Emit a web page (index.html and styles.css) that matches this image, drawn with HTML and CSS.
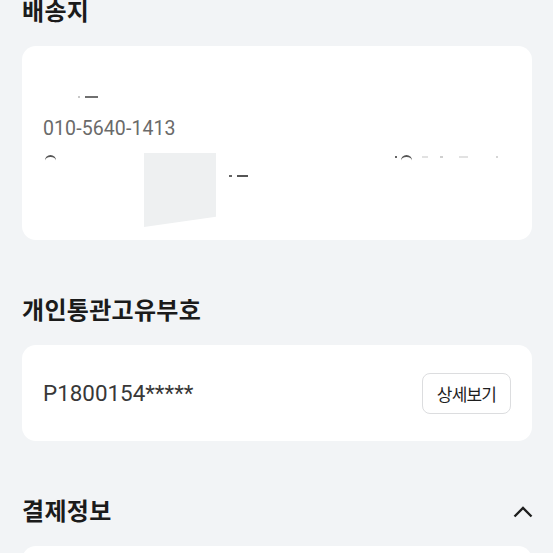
FILE: index.html
```html
<!DOCTYPE html>
<html lang="ko">
<head>
<meta charset="utf-8">
<title>주문 정보</title>
<link rel="stylesheet" href="styles.css">
</head>
<body>
<main class="page">
  <section class="section section-first">
    <h2 class="section-title">배송지</h2>
    <div class="card card-address">
      <div class="addr-name"><span class="mark mark-dot"></span><span class="mark mark-dash"></span></div>
      <div class="addr-phone">010-5640-1413</div>
      <div class="addr-line">
        <span class="mark mark-arc"></span>
        <span class="addr-tail">
          <span class="mark mark-dot3"></span>
          <span class="mark mark-arc"></span>
          <span class="mark mark-faint mark-faint-a"></span>
          <span class="mark mark-faint mark-faint-b"></span>
          <span class="mark mark-faint mark-faint-c"></span>
          <span class="mark mark-faint mark-faint-d"></span>
        </span>
      </div>
      <div class="addr-line2">
        <span class="mark mark-dot2"></span><span class="mark mark-dash2"></span>
      </div>
      <div class="redact"></div>
    </div>
  </section>

  <section class="section">
    <h2 class="section-title">개인통관고유부호</h2>
    <div class="card card-customs">
      <span class="customs-code">P1800154*****</span>
      <button class="btn-detail" type="button">상세보기</button>
    </div>
  </section>

  <section class="section">
    <div class="section-head">
      <h2 class="section-title">결제정보</h2>
      <svg class="chevron" width="20" height="12" viewBox="0 0 20 12" aria-hidden="true">
        <path d="M1.5 10.5 L10 2 L18.5 10.5" fill="none" stroke="#1e1e1e" stroke-width="2.4" stroke-linecap="butt" stroke-linejoin="miter"/>
      </svg>
    </div>
    <div class="card card-payment"></div>
  </section>
</main>
</body>
</html>
```

FILE: styles.css
```css
html, body {
  margin: 0;
  padding: 0;
  background: #f2f4f6;
}

body {
  font-family: Roboto, "Noto Sans CJK KR", sans-serif;
  color: #1e1e1e;
  overflow: hidden;
  height: 553px;
}

.page {
  padding: 0 21px 0 22px;
  display: flex;
  flex-direction: column;
  gap: 54px;
}

.section {
  display: flex;
  flex-direction: column;
  gap: 21px;
}

.section-first {
  margin-top: -5px;
}

.section-title {
  margin: 0;
  font-family: "Noto Sans CJK KR", sans-serif;
  font-weight: 700;
  font-size: 24px;
  line-height: 30px;
  letter-spacing: 0.3px;
  color: #1b1b1b;
}

.section-head {
  display: flex;
  align-items: center;
  justify-content: space-between;
}

.chevron {
  display: block;
  margin-top: 3px;
  margin-right: -1px;
}

.card {
  background: #ffffff;
  border-radius: 14px;
}

.card-address {
  position: relative;
  height: 194px;
  box-sizing: border-box;
  padding: 44px 21px 0 21px;
  display: flex;
  flex-direction: column;
}

.addr-name {
  height: 14px;
  display: flex;
  align-items: center;
  gap: 5px;
  padding-left: 35px;
}

.addr-phone {
  margin-top: 13px;
  font-size: 19.5px;
  line-height: 24px;
  color: #6a6a6a;
  letter-spacing: 0.1px;
}

.addr-line {
  margin-top: 14px;
  height: 10px;
  display: flex;
  align-items: flex-start;
  padding-left: 2px;
}

.addr-tail {
  display: flex;
  align-items: flex-start;
  margin-left: 339px;
  gap: 4px;
}

.addr-line2 {
  margin-top: 4px;
  height: 14px;
  display: flex;
  align-items: center;
  gap: 5px;
  padding-left: 186px;
}

.mark {
  display: block;
  background: #8a8a8a;
}

.mark-dot {
  width: 2px;
  height: 2px;
  background: #c8c8c8;
}

.mark-dash {
  width: 13px;
  height: 1.5px;
  background: #707070;
}

.mark-arc {
  width: 11px;
  height: 4px;
  background: transparent;
  border-top: 2px solid #555;
  border-radius: 6px 6px 0 0;
}

.mark-dot3 {
  width: 2px;
  height: 2px;
  margin-top: 1px;
  background: #666;
}

.mark-faint {
  height: 1.5px;
  margin-top: 1px;
  background: #e2e2e2;
}

.mark-faint-a {
  width: 6px;
  margin-left: 6px;
}

.mark-faint-b {
  width: 3px;
  margin-left: 8px;
  background: #cfcfcf;
}

.mark-faint-c {
  width: 9px;
  margin-left: 12px;
}

.mark-faint-d {
  width: 2px;
  margin-left: 24px;
  background: #d6d6d6;
}

.mark-dot2 {
  width: 3px;
  height: 2px;
  background: #666;
}

.mark-dash2 {
  width: 11px;
  height: 2px;
  background: #555;
}

.redact {
  position: absolute;
  left: 122px;
  top: 107px;
  width: 72px;
  height: 74px;
  background: #eef0f1;
  clip-path: polygon(0 0, 100% 0, 100% 86%, 0 100%);
}

.card-customs {
  height: 96px;
  box-sizing: border-box;
  padding: 0 21px 0 21px;
  display: flex;
  align-items: center;
  justify-content: space-between;
}

.customs-code {
  font-size: 22.4px;
  line-height: 28px;
  color: #383838;
}

.btn-detail {
  width: 89px;
  height: 41px;
  box-sizing: border-box;
  border: 1px solid #dcdddf;
  border-radius: 8px;
  background: #ffffff;
  font-family: "Noto Sans CJK KR", sans-serif;
  font-size: 17px;
  letter-spacing: -0.8px;
  color: #1e1e1e;
  padding: 0;
  margin-top: 1px;
}

.card-payment {
  height: 60px;
}
```
